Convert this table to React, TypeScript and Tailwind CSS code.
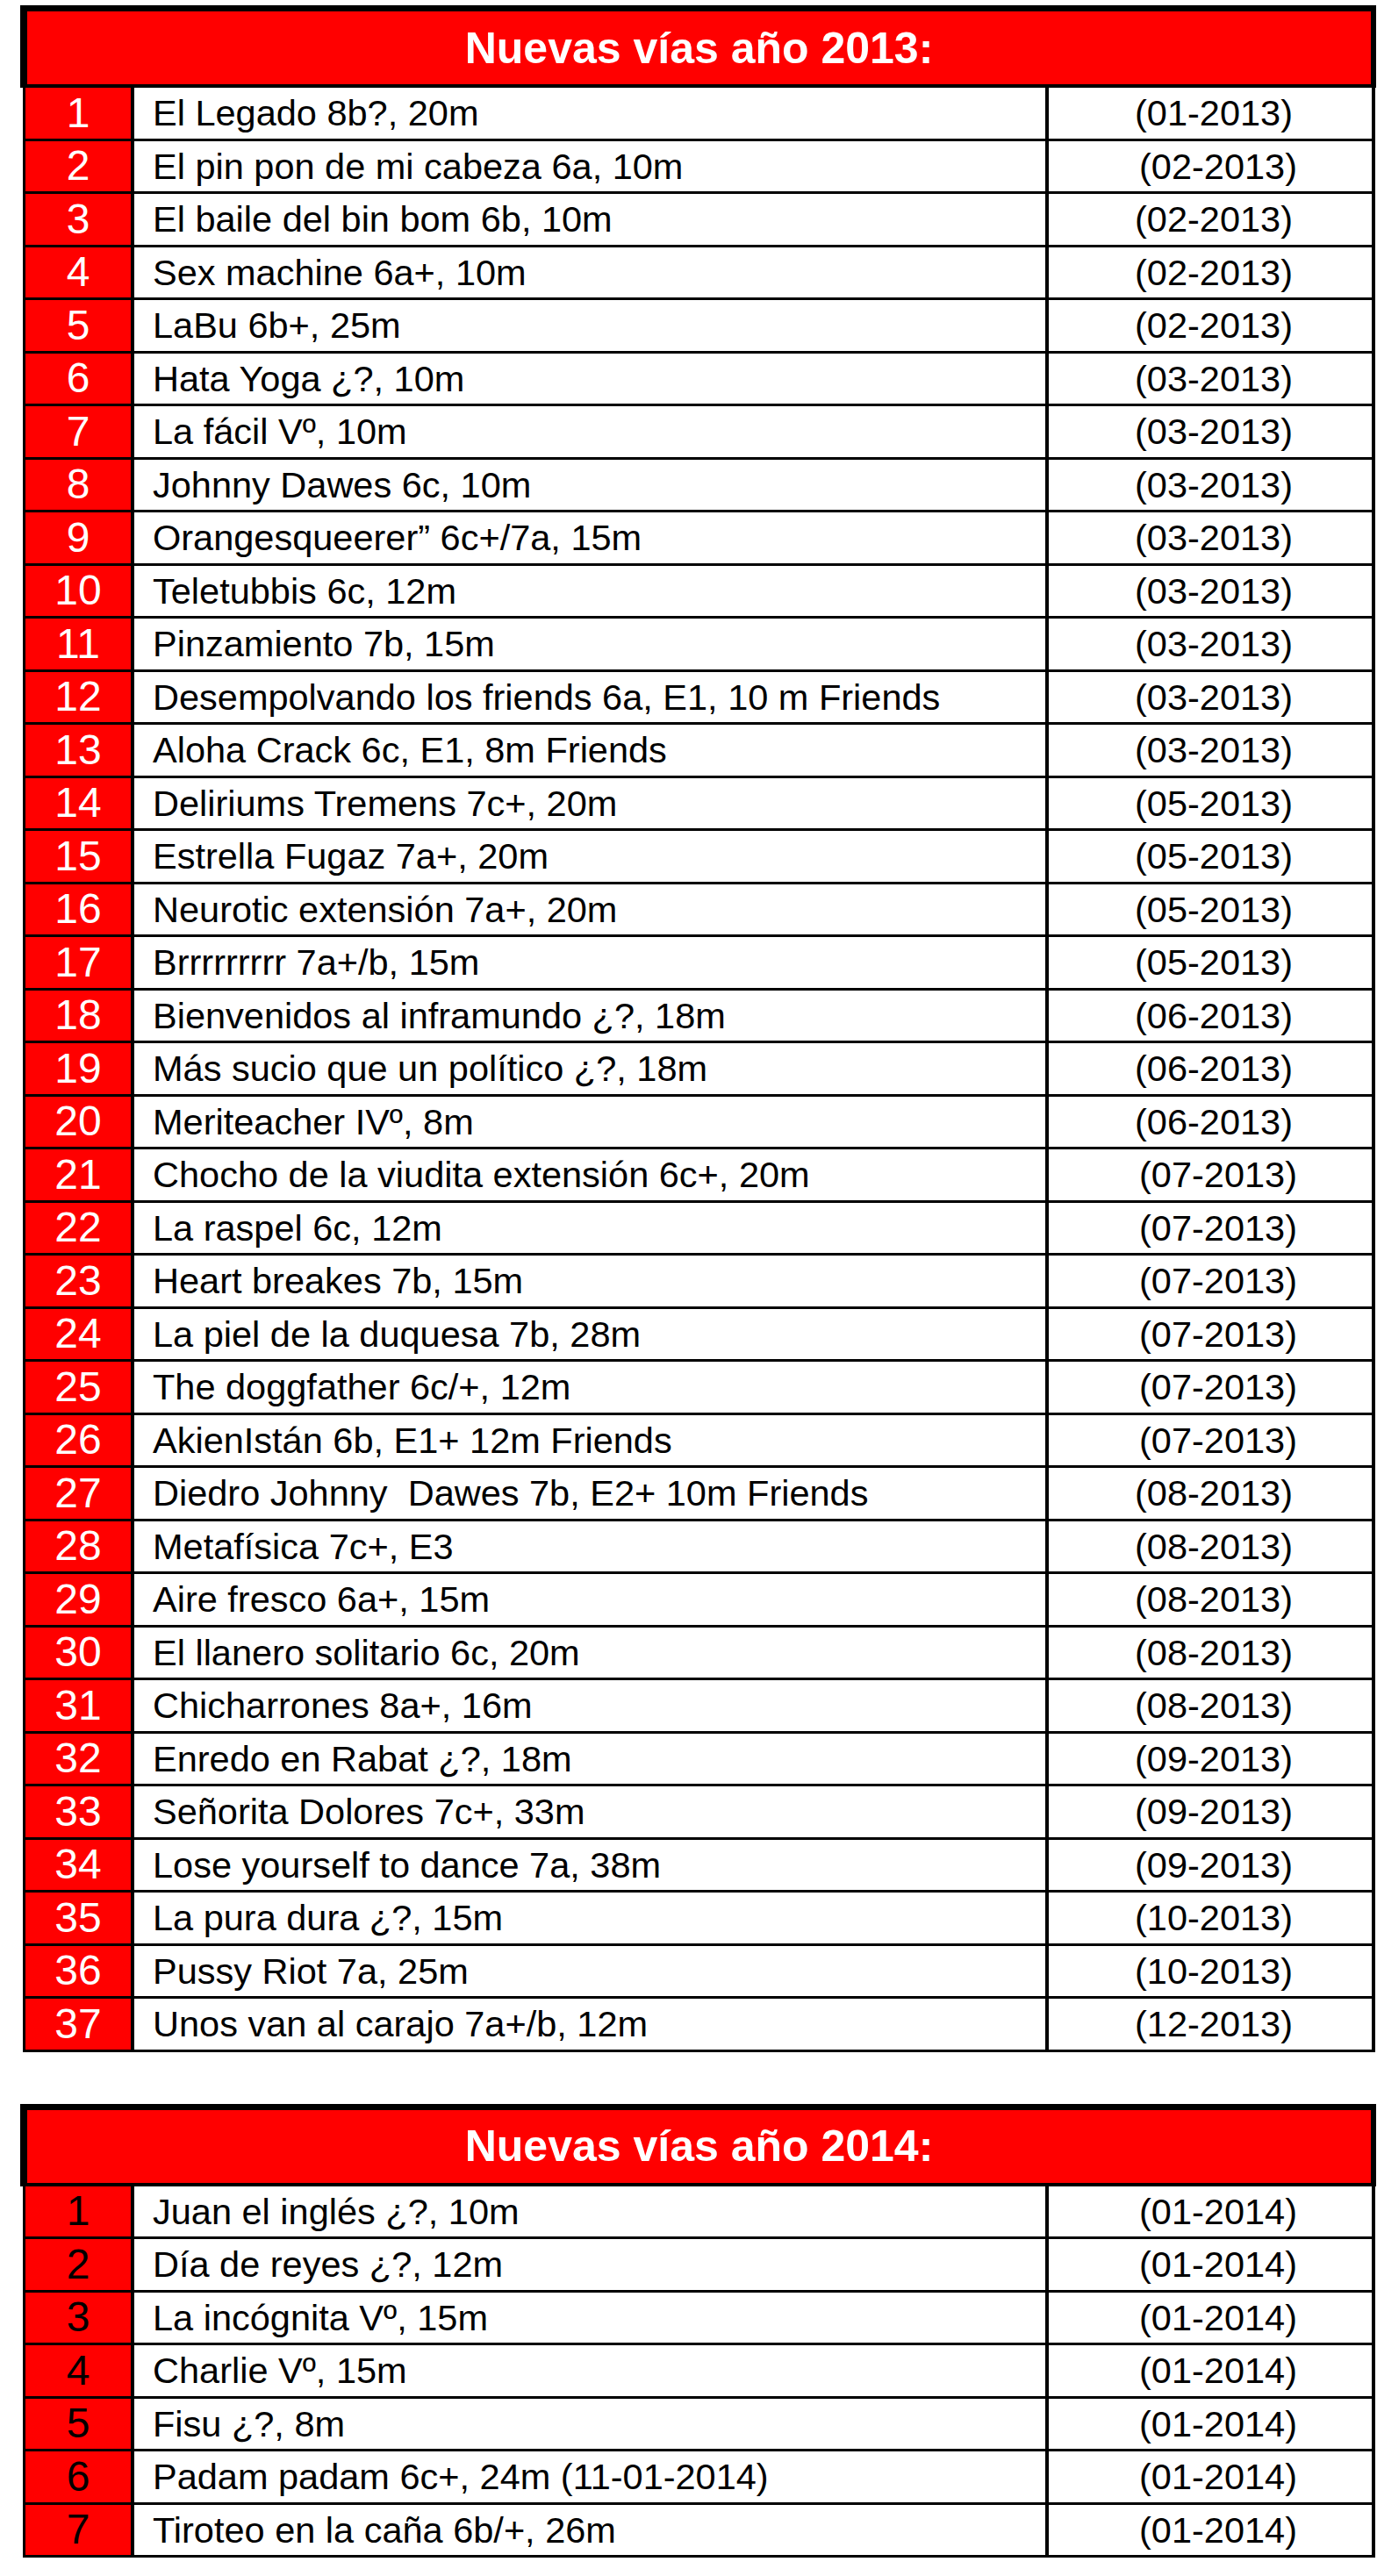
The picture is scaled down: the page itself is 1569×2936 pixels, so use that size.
type Via = { name: string; date: string; shift?: boolean }

const vias2013: Via[] = [
  { name: "El Legado 8b?, 20m", date: "(01-2013)" },
  { name: "El pin pon de mi cabeza 6a, 10m", date: "(02-2013)", shift: true },
  { name: "El baile del bin bom 6b, 10m", date: "(02-2013)" },
  { name: "Sex machine 6a+, 10m", date: "(02-2013)" },
  { name: "LaBu 6b+, 25m", date: "(02-2013)" },
  { name: "Hata Yoga ¿?, 10m", date: "(03-2013)" },
  { name: "La fácil Vº, 10m", date: "(03-2013)" },
  { name: "Johnny Dawes 6c, 10m", date: "(03-2013)" },
  { name: "Orangesqueerer” 6c+/7a, 15m", date: "(03-2013)" },
  { name: "Teletubbis 6c, 12m", date: "(03-2013)" },
  { name: "Pinzamiento 7b, 15m", date: "(03-2013)" },
  { name: "Desempolvando los friends 6a, E1, 10 m Friends", date: "(03-2013)" },
  { name: "Aloha Crack 6c, E1, 8m Friends", date: "(03-2013)" },
  { name: "Deliriums Tremens 7c+, 20m", date: "(05-2013)" },
  { name: "Estrella Fugaz 7a+, 20m", date: "(05-2013)" },
  { name: "Neurotic extensión 7a+, 20m", date: "(05-2013)" },
  { name: "Brrrrrrrrr 7a+/b, 15m", date: "(05-2013)" },
  { name: "Bienvenidos al inframundo ¿?, 18m", date: "(06-2013)" },
  { name: "Más sucio que un político ¿?, 18m", date: "(06-2013)" },
  { name: "Meriteacher IVº, 8m", date: "(06-2013)" },
  { name: "Chocho de la viudita extensión 6c+, 20m", date: "(07-2013)", shift: true },
  { name: "La raspel 6c, 12m", date: "(07-2013)", shift: true },
  { name: "Heart breakes 7b, 15m", date: "(07-2013)", shift: true },
  { name: "La piel de la duquesa 7b, 28m", date: "(07-2013)", shift: true },
  { name: "The doggfather 6c/+, 12m", date: "(07-2013)", shift: true },
  { name: "AkienIstán 6b, E1+ 12m Friends", date: "(07-2013)", shift: true },
  { name: "Diedro Johnny  Dawes 7b, E2+ 10m Friends", date: "(08-2013)" },
  { name: "Metafísica 7c+, E3", date: "(08-2013)" },
  { name: "Aire fresco 6a+, 15m", date: "(08-2013)" },
  { name: "El llanero solitario 6c, 20m", date: "(08-2013)" },
  { name: "Chicharrones 8a+, 16m", date: "(08-2013)" },
  { name: "Enredo en Rabat ¿?, 18m", date: "(09-2013)" },
  { name: "Señorita Dolores 7c+, 33m", date: "(09-2013)" },
  { name: "Lose yourself to dance 7a, 38m", date: "(09-2013)" },
  { name: "La pura dura ¿?, 15m", date: "(10-2013)" },
  { name: "Pussy Riot 7a, 25m", date: "(10-2013)" },
  { name: "Unos van al carajo 7a+/b, 12m", date: "(12-2013)" },
]

const vias2014: Via[] = [
  { name: "Juan el inglés ¿?, 10m", date: "(01-2014)", shift: true },
  { name: "Día de reyes ¿?, 12m", date: "(01-2014)", shift: true },
  { name: "La incógnita Vº, 15m", date: "(01-2014)", shift: true },
  { name: "Charlie Vº, 15m", date: "(01-2014)", shift: true },
  { name: "Fisu ¿?, 8m", date: "(01-2014)", shift: true },
  { name: "Padam padam 6c+, 24m (11-01-2014)", date: "(01-2014)", shift: true },
  { name: "Tiroteo en la caña 6b/+, 26m", date: "(01-2014)", shift: true },
]

function ViasTable({ title, vias, dark }: { title: string; vias: Via[]; dark?: boolean }) {
  return (
    <div>
      <div className="ml-[23px] w-[1545px] h-[94px] bg-[#ff0000] border-black border-t-[7px] border-l-[8px] border-r-[6px] border-b-[4px] flex items-center justify-center">
        <span className="text-white font-bold text-[50px] leading-none">{title}</span>
      </div>
      <div className="ml-[26px] w-[1541px] border-l-[3px] border-r-[4px] border-black">
        {vias.map((v, i) => (
          <div key={i} className="flex h-[60.5px] border-b-[3px] border-black">
            <div
              className={
                "w-[124px] bg-[#ff0000] border-r-[4px] border-black flex items-center justify-center text-[48px] leading-none " +
                (dark ? "text-black" : "text-white")
              }
            >
              {i + 1}
            </div>
            <div className="w-[1042px] border-r-[4px] border-black flex items-center pl-[21px] text-[41.5px] leading-none text-black whitespace-pre">
              {v.name}
            </div>
            <div
              className={
                "flex-1 flex items-center justify-center text-[41.5px] leading-none text-black " +
                (v.shift ? "pl-[18px]" : "pl-[8px]")
              }
            >
              {v.date}
            </div>
          </div>
        ))}
      </div>
    </div>
  )
}

export default function App() {
  return (
    <div className="min-h-[2936px] bg-white pt-[6px] font-['Liberation_Sans',Arial,sans-serif]">
      <ViasTable title="Nuevas vías año 2013:" vias={vias2013} />
      <div className="h-[59px]" />
      <ViasTable title="Nuevas vías año 2014:" vias={vias2014} dark />
    </div>
  )
}
